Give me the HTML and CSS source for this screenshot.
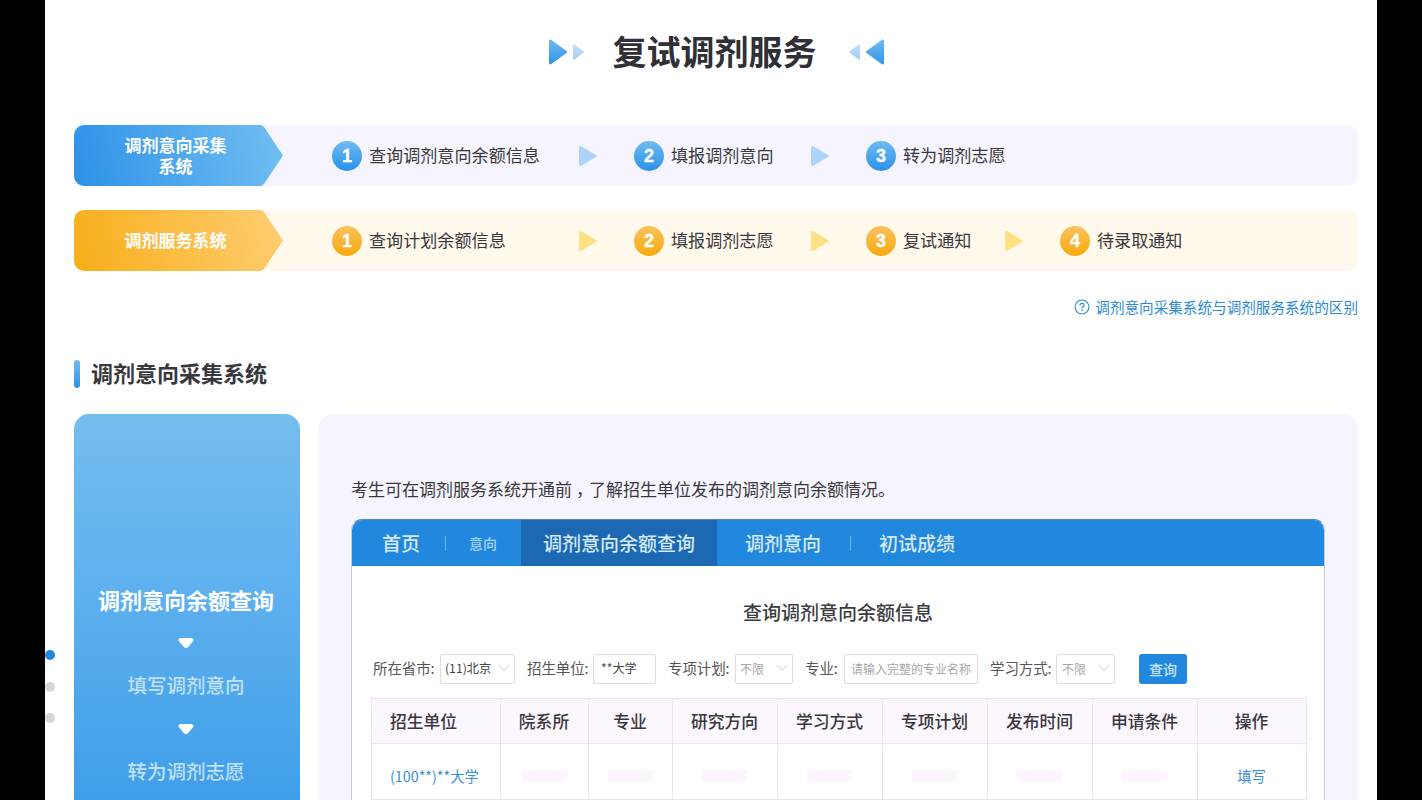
FILE: index.html
```html
<!DOCTYPE html>
<html lang="zh-CN">
<head>
<meta charset="utf-8">
<title>复试调剂服务</title>
<link rel="stylesheet" href="styles.css">
</head>
<body>
<svg class="defs" width="0" height="0" aria-hidden="true">
  <defs>
    <linearGradient id="deep" x1="0" y1="0" x2="0" y2="1"><stop offset="0" stop-color="#70bbf0"/><stop offset="1" stop-color="#2e94e8"/></linearGradient>
    <linearGradient id="pale" x1="0" y1="0" x2="0" y2="1"><stop offset="0" stop-color="#c2e0fb"/><stop offset="1" stop-color="#a2cdf7"/></linearGradient>
    <symbol id="tri" viewBox="0 0 18 22"><path d="M0 2.5Q0 0 2.3 1.2L17 10Q18.6 11 17 12L2.3 20.8Q0 22 0 19.5Z"/></symbol>
    <symbol id="caret" viewBox="0 0 16 11"><path d="M2.6 0H13.4Q16.8.7 15 3.3L10.2 8.9Q8 11.3 5.8 8.9L1 3.3Q-.8.7 2.6 0Z"/></symbol>
    <symbol id="chev" viewBox="0 0 12 8"><path d="M.8 1L6 6.6L11.2 1" fill="none" stroke="currentColor"/></symbol>
  </defs>
</svg>
<div class="page">
  <nav class="dots"><i class="on"></i><i></i><i></i></nav>
  <header class="title">
    <svg width="36" height="26" viewBox="0 0 36 26"><path fill="url(#deep)" d="M0 2Q0 0 2 .8L17.5 12Q18.8 13 17.5 14L2 25.2Q0 26 0 24Z"/><path fill="url(#pale)" d="M24 6.5Q24 4.6 25.5 5.6L34.4 12.2Q35.4 13 34.4 13.8L25.5 20.4Q24 21.4 24 19.5Z"/></svg>
    <h1>复试调剂服务</h1>
    <svg class="flip" width="36" height="26" viewBox="0 0 36 26"><path fill="url(#deep)" d="M0 2Q0 0 2 .8L17.5 12Q18.8 13 17.5 14L2 25.2Q0 26 0 24Z"/><path fill="url(#pale)" d="M24 6.5Q24 4.6 25.5 5.6L34.4 12.2Q35.4 13 34.4 13.8L25.5 20.4Q24 21.4 24 19.5Z"/></svg>
  </header>

  <section class="flow blue">
    <div class="tag">调剂意向采集<br>系统</div>
    <div class="steps">
      <div class="step"><b>1</b><span>查询调剂意向余额信息</span><svg class="arrow"><use href="#tri"/></svg></div>
      <div class="step"><b>2</b><span>填报调剂意向</span><svg class="arrow"><use href="#tri"/></svg></div>
      <div class="step"><b>3</b><span>转为调剂志愿</span></div>
    </div>
  </section>
  <section class="flow gold">
    <div class="tag">调剂服务系统</div>
    <div class="steps">
      <div class="step"><b>1</b><span>查询计划余额信息</span><svg class="arrow"><use href="#tri"/></svg></div>
      <div class="step"><b>2</b><span>填报调剂志愿</span><svg class="arrow"><use href="#tri"/></svg></div>
      <div class="step"><b>3</b><span>复试通知</span><svg class="arrow"><use href="#tri"/></svg></div>
      <div class="step"><b>4</b><span>待录取通知</span></div>
    </div>
  </section>

  <a class="help"><svg width="16" height="16" viewBox="0 0 16 16" fill="none" stroke="currentColor"><circle cx="8" cy="8" r="7" stroke-width="1.1"/><path d="M5.9 6.4Q6 4.3 8 4.3T10.1 6.2C10.1 7.5 8 7.7 8 9.4" stroke-width="1.2"/><path d="M8 10.6V11.9" stroke-width="1.3"/></svg><span>调剂意向采集系统与调剂服务系统的区别</span></a>

  <h2><span>调剂意向采集系统</span></h2>

  <div class="columns">
    <aside>
      <strong>调剂意向余额查询</strong>
      <svg class="caret"><use href="#caret"/></svg>
      <span>填写调剂意向</span>
      <svg class="caret"><use href="#caret"/></svg>
      <span>转为调剂志愿</span>
    </aside>
    <main>
      <p>考生可在调剂服务系统开通前<span class="comma">，</span>了解招生单位发布的调剂意向余额情况。</p>
      <div class="frame">
        <div class="menu">
          <span class="home">首页</span><i></i><small>意向</small>
          <span class="current">调剂意向余额查询</span>
          <span class="intent">调剂意向</span><i></i><span class="score">初试成绩</span>
        </div>
        <h3>查询调剂意向余额信息</h3>
        <div class="filters">
          <label class="province"><span>所在省市:</span><span class="box">(11)北京<svg><use href="#chev"/></svg></span></label>
          <label class="school"><span>招生单位:</span><span class="box">**大学</span></label>
          <label class="plan"><span>专项计划:</span><span class="box mute">不限<svg><use href="#chev"/></svg></span></label>
          <label class="major"><span>专业:</span><span class="box mute">请输入完整的专业名称</span></label>
          <label class="mode"><span>学习方式:</span><span class="box mute">不限<svg><use href="#chev"/></svg></span></label>
          <button>查询</button>
        </div>
        <div class="grid">
          <div class="th first">招生单位</div><div class="th">院系所</div><div class="th">专业</div><div class="th">研究方向</div><div class="th">学习方式</div><div class="th">专项计划</div><div class="th">发布时间</div><div class="th">申请条件</div><div class="th">操作</div>
          <div class="td first">(100**)**大学</div><div class="td"><i></i></div><div class="td"><i></i></div><div class="td"><i></i></div><div class="td"><i></i></div><div class="td"><i></i></div><div class="td"><i></i></div><div class="td"><i></i></div><div class="td">填写</div>
        </div>
      </div>
    </main>
  </div>
</div>
</body>
</html>
```
FILE: styles.css
```css
* { box-sizing: border-box; }
html, body { height: 100%; }
body { margin: 0; background: #000; overflow: hidden; font-family: "Noto Sans CJK SC", sans-serif; color: #38383c; }
.defs { position: absolute; }
.page { position: relative; width: 1332px; height: 800px; margin-left: 45px; padding: 0 19px 0 29px; background: #fff; overflow: hidden; }
h1, h2, h3, p { margin: 0; }

.dots { position: absolute; left: 0; top: 650px; display: grid; gap: 21.5px; }
.dots i { width: 10px; height: 10px; border-radius: 50%; background: #d6d6d6; }
.dots .on { background: #2388dc; }

.title { height: 104px; margin-bottom: 21px; display: flex; justify-content: center; align-items: center; gap: 28px; }
.title h1 { margin-right: 3px; padding-bottom: 2px; font-size: 34px; line-height: 50px; font-weight: 700; color: #2f2f35; }
.title .flip { transform: scaleX(-1); }

.flow { display: flex; height: 61px; margin-bottom: 24px; border-radius: 10px; }
.blue { background: #f6f5ff; }
.gold { background: #fff9ec; }
.tag { width: 209px; padding: 0 6px 2px 0; display: flex; align-items: center; justify-content: center; text-align: center; color: #fff; font-size: 17px; line-height: 21px; font-weight: 700; border-radius: 10px 0 0 10px; clip-path: polygon(0 0, 187px 0, 190px 2px, 100% 50%, 190px 59px, 187px 100%, 0 100%); }
.blue .tag { background: linear-gradient(75deg, #2d91e8, #72bff2); }
.gold .tag { background: linear-gradient(75deg, #f7ae19, #ffcd72); }
.steps { display: grid; grid-template-columns: 302px 232px 194px auto; margin-left: 49px; }
.step { display: flex; align-items: center; font-size: 17.1px; line-height: 24px; white-space: nowrap; }
.step span { padding-bottom: 2px; }
.step b { width: 30px; height: 30px; margin-right: 7px; border-radius: 50%; text-align: center; color: #fff; font: 700 18px/30px "Liberation Sans", sans-serif; -webkit-text-stroke: .3px #fff; }
.blue b { background: linear-gradient(#6fbcf0, #2990e9); }
.gold b { background: linear-gradient(#fac35f, #f8a90b); }
.arrow { width: 18px; height: 22px; margin: 0 37px 0 auto; }
.blue .arrow { fill: #add5fa; }
.gold .arrow { fill: #ffe083; }

.help { display: flex; align-items: center; justify-content: flex-end; gap: 5px; height: 24px; color: #2b8ad8; font-size: 14.6px; line-height: 24px; }
.help span { padding-bottom: 1px; }

h2 { display: flex; align-items: center; height: 28px; margin: 41px 0 26px; font-size: 22px; line-height: 28px; }
h2::before { content: ""; width: 6px; height: 28px; margin-right: 11px; border-radius: 3px; background: linear-gradient(#70bbf0, #2e94e8); }
h2 span { padding-bottom: 4px; }

.columns { display: grid; grid-template-columns: 226px 1040px; gap: 18px; height: 700px; }
aside { display: flex; flex-direction: column; align-items: center; padding: 170px 2px 0 0; border-radius: 15px; color: #fff; background: linear-gradient(#75bdee, #62b2ef 150px, #3f9fe9 386px, #2d8fe3); }
aside strong { font-size: 22px; line-height: 30px; }
aside span { font-size: 19.5px; line-height: 30px; font-weight: 500; color: #c2e0fa; }
.caret { width: 16px; height: 11px; margin: 24px 0 21px; fill: #fff; }
main { padding: 61px 33px; border-radius: 15px; background: #f6f5ff; }
main p { font-size: 17px; line-height: 28px; }
.comma { display: inline-block; transform: translateX(4px); }

.frame { width: 974px; height: 600px; margin-top: 16px; border: 1px solid #c9c9d8; border-top-color: #5187b8; border-radius: 11px; background: #fff; overflow: hidden; }
.menu { display: flex; align-items: center; height: 46px; background: #2288dd; color: #d6eafc; font-size: 19px; font-weight: 500; line-height: 46px; }
.menu i { width: 1px; height: 15px; background: #72b6ed; }
.home { margin: 0 25px 0 30px; }
.menu small { font-size: 14px; margin: 0 24px 0 23px; color: #a8d2f5; }
.menu .current { width: 196px; text-align: center; background: #1c68b3; }
.intent { margin: 0 29px 0 28px; }
.score { margin-left: 28px; }
h3 { margin: 31px 0 27px; text-align: center; font-size: 19px; line-height: 30px; font-weight: 500; color: #3c3c42; }

.filters { display: flex; padding-left: 21px; color: #555; font-size: 14.5px; }
.filters label { display: flex; align-items: center; height: 30px; margin-right: 12px; white-space: nowrap; }
.filters label > span:first-child { padding-bottom: 3px; letter-spacing: -.1px; }
.box { display: flex; align-items: center; justify-content: space-between; height: 30px; margin-left: auto; padding: 0 4px 2px; border: 1px solid #e3d9e3; border-radius: 2px; font-size: 12.2px; color: #444; }
.box svg { width: 12px; height: 8px; color: #ccc; }
.mute { color: #aaa5ac; font-size: 12px; }
.province { width: 142px; }
.province .box { width: 75px; }
.school { width: 129px; }
.school .box { width: 63px; padding-left: 7px; }
.plan { width: 125px; }
.plan .box { width: 58px; }
.major { width: 173px; }
.major .box { width: 134px; padding-left: 6px; }
.mode { width: 125px; }
.mode .box { width: 59px; padding-left: 5px; }
.filters button { width: 48px; height: 30px; margin-left: 12px; padding: 0; border: 0; border-radius: 3px; background: #2288dd; color: #c9e5fb; font: 500 14px/30px "Noto Sans CJK SC", sans-serif; }

.grid { display: grid; grid-template-columns: 129px 88px 84px 105px 105px 105px 105px 105px 109px; grid-template-rows: 45px 56px; width: 936px; margin: 14px 0 0 19px; border: solid #eee4f1; border-width: 1px 0 0 1px; }
.th, .td { display: flex; align-items: center; justify-content: center; border: solid #eee4f1; border-width: 0 1px 1px 0; }
.th { padding-right: 1px; background: #fcf6ff; font-size: 16.8px; font-weight: 500; }
.td { padding: 8px 1px 0 0; font-size: 14.3px; color: #3d8fd5; }
.grid .first { justify-content: flex-start; padding-left: 18px; }
.td i { width: 45px; height: 11px; background: #fcf5fd; }
```
